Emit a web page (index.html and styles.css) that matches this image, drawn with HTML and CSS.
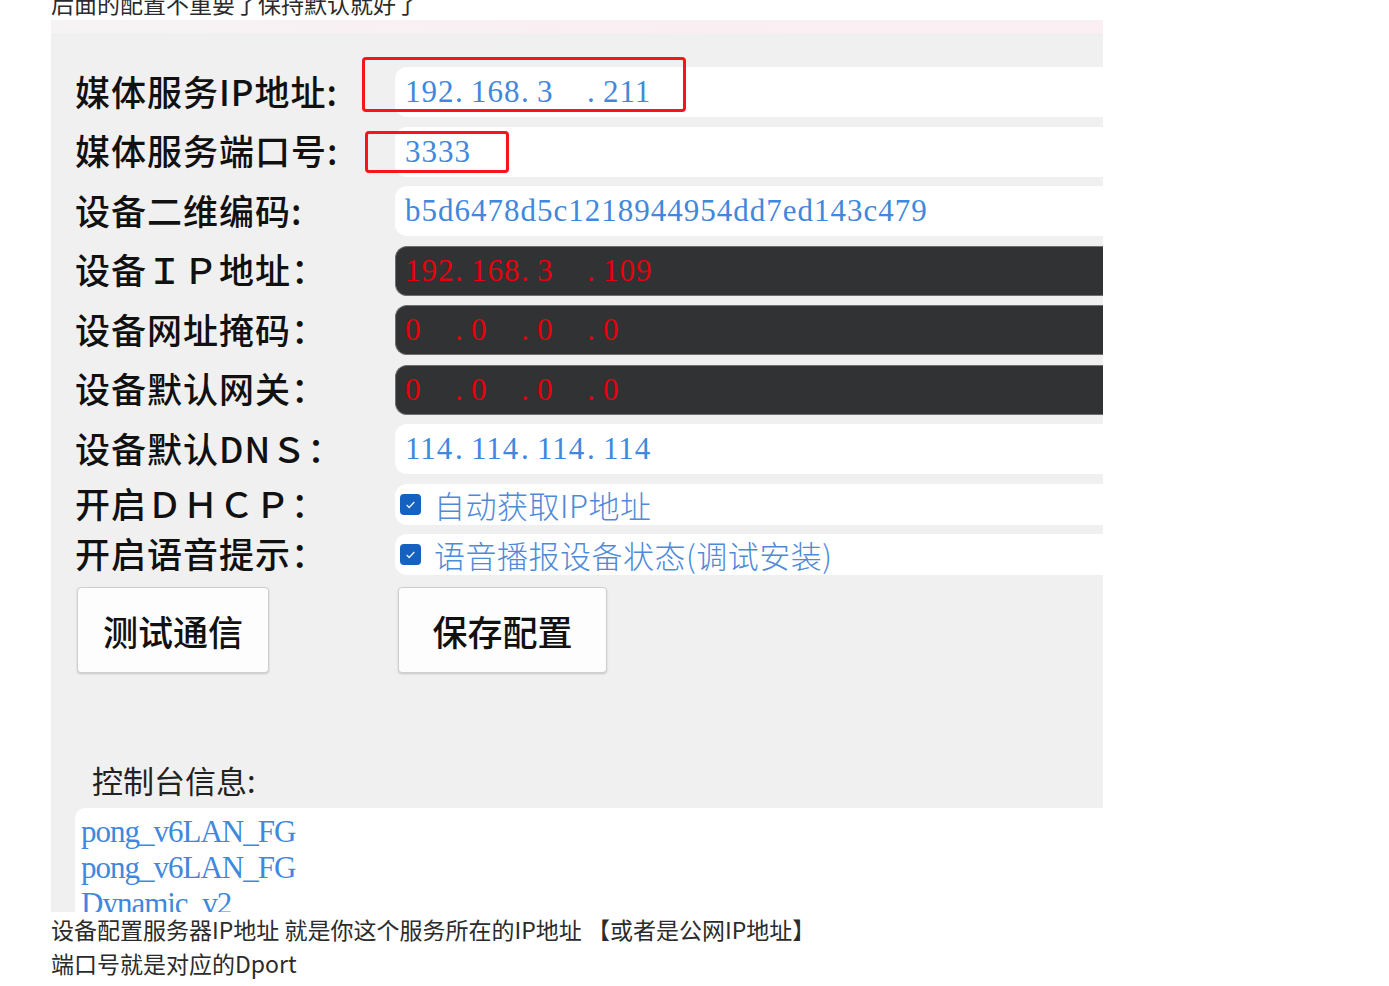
FILE: index.html
```html
<!DOCTYPE html>
<html lang="zh-CN">
<head>
    <meta charset="UTF-8">
    <meta name="viewport" content="width=device-width, initial-scale=1.0">
    <title>设备配置</title>
    <link rel="stylesheet" href="styles.css">
</head>
<body>
    <div class="post">
        <p>后面的配置不重要了保持默认就好了</p>

        <div class="shot">
            <div class="strip"></div>
            <div class="form">
                <div class="label">媒体服务IP地址:</div>
                <div class="field">
                    <span class="oct">192</span><span class="dot">.</span><span class="oct">168</span><span class="dot">.</span><span class="oct">3</span><span class="dot">.</span><span class="oct">211</span>
                </div>

                <div class="label">媒体服务端口号:</div>
                <div class="field">3333</div>

                <div class="label">设备二维编码:</div>
                <div class="field">b5d6478d5c1218944954dd7ed143c479</div>

                <div class="label">设备ＩＰ地址：</div>
                <div class="field dark">
                    <span class="oct">192</span><span class="dot">.</span><span class="oct">168</span><span class="dot">.</span><span class="oct">3</span><span class="dot">.</span><span class="oct">109</span>
                </div>

                <div class="label">设备网址掩码：</div>
                <div class="field dark">
                    <span class="oct">0</span><span class="dot">.</span><span class="oct">0</span><span class="dot">.</span><span class="oct">0</span><span class="dot">.</span><span class="oct">0</span>
                </div>

                <div class="label">设备默认网关：</div>
                <div class="field dark">
                    <span class="oct">0</span><span class="dot">.</span><span class="oct">0</span><span class="dot">.</span><span class="oct">0</span><span class="dot">.</span><span class="oct">0</span>
                </div>

                <div class="label">设备默认DNＳ：</div>
                <div class="field">
                    <span class="oct">114</span><span class="dot">.</span><span class="oct">114</span><span class="dot">.</span><span class="oct">114</span><span class="dot">.</span><span class="oct">114</span>
                </div>

                <div class="label">开启ＤＨＣＰ：</div>
                <div class="field check">
                    <span class="box"><svg viewBox="0 0 20 20"><path d="M5.5 10.5l3 3 6-6.5" /></svg></span>
                    <span>自动获取IP地址</span>
                </div>

                <div class="label">开启语音提示：</div>
                <div class="field check">
                    <span class="box"><svg viewBox="0 0 20 20"><path d="M5.5 10.5l3 3 6-6.5" /></svg></span>
                    <span>语音播报设备状态(调试安装)</span>
                </div>
            </div>

            <div class="buttons">
                <button class="btn btn-test">测试通信</button>
                <button class="btn btn-save">保存配置</button>
            </div>

            <div class="console-title">控制台信息:</div>
            <div class="console">
                pong_v6LAN_FG<br>
                pong_v6LAN_FG<br>
                Dynamic_v2
            </div>

            <!-- red annotation boxes drawn on the screenshot -->
            <div class="mark mark-ip"></div>
            <div class="mark mark-port"></div>
        </div>

        <p>设备配置服务器IP地址 就是你这个服务所在的IP地址 【或者是公网IP地址】</p>
        <p>端口号就是对应的Dport</p>
    </div>
</body>
</html>
```

FILE: styles.css
```css
body {
    margin: 0;
    background: #fff;
    font-family: "Noto Sans CJK SC", "Noto Sans", sans-serif;
    color: #2b2b2b;
}
.post {
    margin-top: -14px;
    padding-left: 51px;
}
.post p {
    margin: 0;
    font-size: 23px;
    line-height: 34px;
}

/* the pasted screenshot */
.shot {
    position: relative;
    width: 1052px;
    height: 892px;
    overflow: hidden;
    background: #f0f0f0;
}
.strip {
    height: 13px;
    background: linear-gradient(to right, #f6f3f4, #faeef2 60%, #fbeff3);
}
.form {
    display: grid;
    grid-template-columns: 320px 1fr;
    row-gap: 9.5px;
    align-items: center;
    padding: 34px 0 0 24px;
}
.label {
    padding-bottom: 4px;
    font-size: 35px;
    font-weight: 500;
    line-height: 1;
    letter-spacing: 1px;
    color: #111;
    white-space: nowrap;
}
.field {
    height: 50px;
    box-sizing: border-box;
    display: flex;
    align-items: center;
    padding-left: 10px;
    background: #fff;
    border-radius: 12px 0 0 12px;
    font-family: "Liberation Serif", serif;
    font-size: 31px;
    letter-spacing: 1px;
    color: #3f88dc;
    white-space: nowrap;
}
.field.dark {
    background: #313234;
    border: 1px solid #6e6e6e;
    border-right: none;
    color: #e6000c;
    padding-left: 9px;
}
.oct {
    width: 50px;
    flex-shrink: 0;
}
.dot {
    width: 16px;
    flex-shrink: 0;
}
.field.check {
    height: 41px;
    padding-left: 5px;
    gap: 13px;
    font-family: "Noto Sans CJK SC", sans-serif;
    font-size: 31px;
    font-weight: 300;
    letter-spacing: 0.5px;
    color: #4f8ad8;
}
.box {
    width: 21px;
    height: 21px;
    border-radius: 4px;
    background: #1461bf;
    display: flex;
    align-items: center;
    justify-content: center;
}
.box svg {
    width: 17px;
    height: 17px;
}
.box path {
    fill: none;
    stroke: #e8f0fb;
    stroke-width: 1.6;
}

.buttons {
    display: flex;
    gap: 129px;
    margin-top: 12px;
    padding-left: 26px;
}
.btn {
    height: 86px;
    background: #fdfdfd;
    border: 1px solid #cfcfcf;
    border-radius: 4px;
    box-shadow: 0 1px 2px rgba(0, 0, 0, 0.18);
    font-family: "Noto Sans CJK SC", sans-serif;
    font-size: 35px;
    font-weight: 500;
    color: #111;
    padding: 0;
}
.btn-test {
    width: 192px;
}
.btn-save {
    width: 209px;
}

.console-title {
    margin-top: 87px;
    padding-left: 41px;
    font-size: 31px;
    line-height: 40px;
    color: #222;
}
.console {
    margin: 8px 0 0 24px;
    padding: 6px 0 0 6px;
    background: #fff;
    border-top-left-radius: 10px;
    font-family: "Liberation Serif", serif;
    font-size: 31px;
    line-height: 36px;
    letter-spacing: -1px;
    color: #3f88dc;
}

.mark {
    position: absolute;
    box-sizing: border-box;
    border: 3px solid #f5161c;
    border-radius: 4px;
}
.mark-ip {
    left: 311px;
    top: 37px;
    width: 324px;
    height: 55px;
}
.mark-port {
    left: 314px;
    top: 111px;
    width: 144px;
    height: 42px;
}
```
